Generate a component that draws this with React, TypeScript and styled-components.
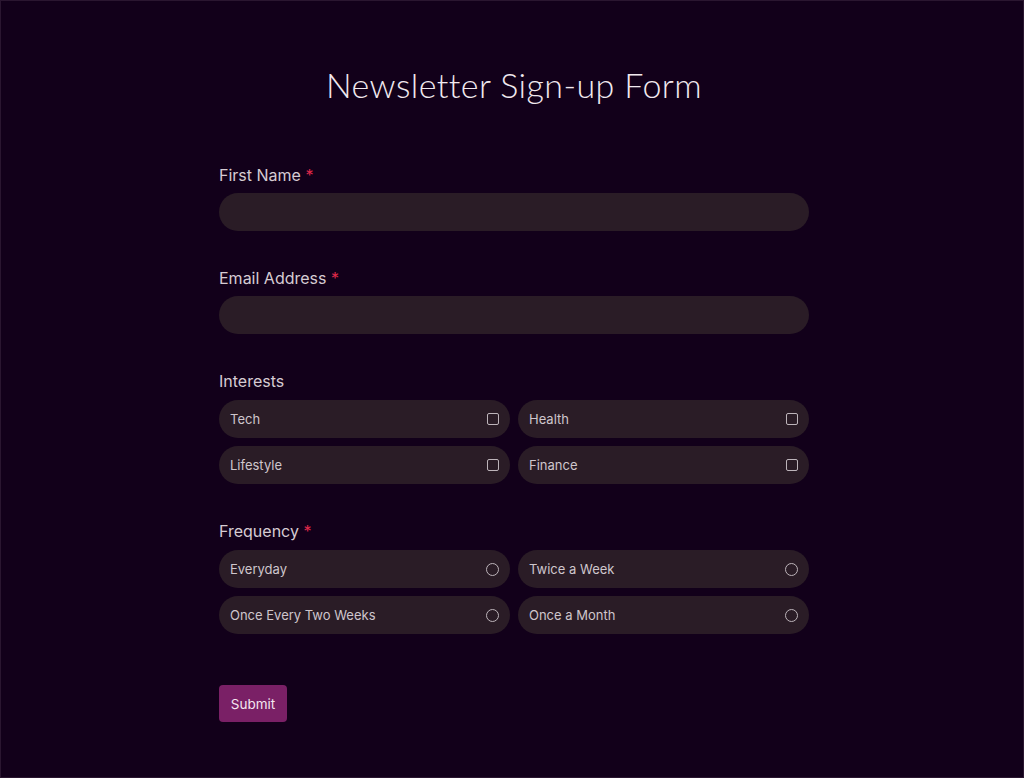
import React from "react";
import styled, { createGlobalStyle } from "styled-components";

const GlobalStyle = createGlobalStyle`
  html, body {
    margin: 0;
    padding: 0;
    background: #12001a;
  }
  body {
    font-family: Inter, "Open Sans", Arial, sans-serif;
  }
`;

const interests = ["Tech", "Health", "Lifestyle", "Finance"];
const frequencies = ["Everyday", "Twice a Week", "Once Every Two Weeks", "Once a Month"];

const App: React.FC = () => {
  return (
    <Page>
      <GlobalStyle />
      <Title>Newsletter Sign-up Form</Title>
      <Form onSubmit={e => e.preventDefault()}>
        <Field>
          <Label>
            First Name <Required>*</Required>
          </Label>
          <Input type="text" />
        </Field>
        <Field>
          <Label>
            Email Address <Required>*</Required>
          </Label>
          <Input type="email" />
        </Field>
        <Field>
          <Label>Interests</Label>
          <OptionGrid>
            {interests.map(item => (
              <Option key={item}>
                <span>{item}</span>
                <CheckBox type="checkbox" name="interests" />
              </Option>
            ))}
          </OptionGrid>
        </Field>
        <Field>
          <Label>
            Frequency <Required>*</Required>
          </Label>
          <OptionGrid>
            {frequencies.map(item => (
              <Option key={item}>
                <span>{item}</span>
                <Radio type="radio" name="frequency" />
              </Option>
            ))}
          </OptionGrid>
        </Field>
        <SubmitButton type="submit">Submit</SubmitButton>
      </Form>
    </Page>
  );
};

const Page = styled.div`
  min-height: 778px;
  box-sizing: border-box;
  padding: 64px 0 0 4px;
  display: flex;
  flex-direction: column;
  align-items: center;
  border: 1px solid #2a1630;
`;

const Title = styled.h1`
  margin: 0;
  font-family: Lato, "Open Sans", sans-serif;
  font-weight: 300;
  font-size: 34px;
  line-height: 40px;
  color: #f1e9ef;
  letter-spacing: 0.4px;
`;

const Form = styled.form`
  width: 590px;
  margin-top: 58px;
  display: flex;
  flex-direction: column;
  gap: 35px;
`;

const Field = styled.div`
  display: flex;
  flex-direction: column;
  gap: 6px;
`;

const Label = styled.label`
  font-size: 16px;
  line-height: 24px;
  color: #d6ccd3;
`;

const Required = styled.span`
  color: #e0294a;
`;

const Input = styled.input`
  height: 38px;
  box-sizing: border-box;
  border: none;
  border-radius: 19px;
  background: #2a1c26;
  outline: none;
  padding: 0 16px;
  color: #eee;
  font-size: 14px;
`;

const OptionGrid = styled.div`
  margin-top: 1px;
  display: grid;
  grid-template-columns: 1fr 1fr;
  gap: 8px;
`;

const Option = styled.label`
  height: 38px;
  box-sizing: border-box;
  border-radius: 19px;
  background: #2a1c26;
  display: flex;
  align-items: center;
  justify-content: space-between;
  padding: 0 11px;
  font-size: 13px;
  color: #cfc6cc;
  cursor: pointer;
`;

const CheckBox = styled.input`
  appearance: none;
  margin: 0;
  width: 12px;
  height: 12px;
  border: 1.5px solid #bdb4ba;
  border-radius: 2px;
  box-sizing: border-box;
`;

const Radio = styled.input`
  appearance: none;
  margin: 0;
  width: 13px;
  height: 13px;
  border: 1.5px solid #bdb4ba;
  border-radius: 50%;
  box-sizing: border-box;
`;

const SubmitButton = styled.button`
  align-self: flex-start;
  margin-top: 16px;
  width: 68px;
  height: 37px;
  border: none;
  border-radius: 4px;
  background: #7a2066;
  color: #f4e6ef;
  font-family: Inter, sans-serif;
  font-size: 13.5px;
  cursor: pointer;
`;

export default App;
